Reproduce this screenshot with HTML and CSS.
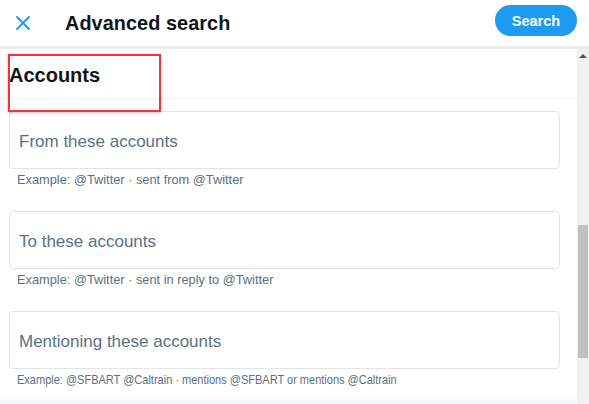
FILE: index.html
```html
<!DOCTYPE html>
<html>
<head>
<meta charset="utf-8">
<link rel="stylesheet" href="styles.css">
</head>
<body>
<div class="page">
  <header class="topbar">
    <div class="close">
      <svg viewBox="0 0 14 14" width="14" height="14"><path d="M1 1 L13 13 M13 1 L1 13" stroke="#1d9bf0" stroke-width="1.8" fill="none" stroke-linecap="round"/></svg>
    </div>
    <h1 class="title">Advanced search</h1>
    <button class="search-btn">Search</button>
  </header>
  <div class="band"></div>
  <div class="main">
    <div class="content">
      <div class="section-head">
        <h2 class="section-title">Accounts</h2>
        <div class="annot"></div>
      </div>
      <div class="field">
        <div class="box">From these accounts</div>
        <div class="hint">Example: @Twitter · sent from @Twitter</div>
      </div>
      <div class="field">
        <div class="box">To these accounts</div>
        <div class="hint">Example: @Twitter · sent in reply to @Twitter</div>
      </div>
      <div class="field">
        <div class="box">Mentioning these accounts</div>
        <div class="hint"><span class="narrow">Example: @SFBART @Caltrain · mentions @SFBART or mentions @Caltrain</span></div>
      </div>
      <div class="next"></div>
    </div>
    <div class="scrollbar">
      <div class="arrow"></div>
      <div class="track-top"></div>
      <div class="thumb"></div>
    </div>
  </div>
</div>
</body>
</html>
```

FILE: styles.css
```css
* { box-sizing: border-box; }
html, body { margin: 0; padding: 0; background: #fff; }
body { font-family: "Liberation Sans", Arial, sans-serif; color: #0f1419; }
.page { width: 589px; height: 404px; overflow: hidden; display: flex; flex-direction: column; }
.topbar { height: 46px; display: flex; align-items: center; padding: 0 12px 0 16px; flex-shrink: 0; }
.close { width: 14px; height: 14px; display: flex; margin-top: -1px; }
.title { margin: 0 0 0 35px; font-size: 19.8px; font-weight: 700; flex: 1; letter-spacing: 0.1px; }
.search-btn { width: 82px; height: 31px; border: none; border-radius: 16px; background: #1d9bf0; color: #fff; font-family: "Liberation Sans", Arial, sans-serif; font-weight: 700; font-size: 14.5px; margin-top: -5px; padding: 0; }
.band { height: 3px; background: #e8edf1; flex-shrink: 0; }
.main { flex: 1; display: flex; min-height: 0; }
.content { width: 577px; display: flex; flex-direction: column; }
.section-head { position: relative; height: 50px; border-bottom: 1px solid #eff3f4; display: flex; align-items: center; padding-left: 9px; }
.section-title { margin: 0; font-size: 20px; font-weight: 700; margin-top: 3px; }
.annot { position: absolute; left: 8px; top: 5px; width: 153px; height: 58px; border: 2px solid #e8383d; box-shadow: 0 1px 3px rgba(0,0,0,0.25); }
.field { height: 100px; padding: 12px 17px 0 9px; flex-shrink: 0; }
.box { height: 58px; border: 1px solid #dfe5ea; border-radius: 4px; display: flex; align-items: center; padding: 3px 0 0 9px; font-size: 17px; color: #5b7083; }
.hint { padding: 3px 0 0 8px; font-size: 12.8px; line-height: 16px; color: #5b7083; white-space: nowrap; }
.narrow { display: inline-block; transform: scaleX(0.86); transform-origin: left center; }
.next { flex: 1; background: #f5f8fa; }
.scrollbar { width: 12px; background: #f1f1f1; display: flex; flex-direction: column; align-items: center; }
.arrow { width: 0; height: 0; border-left: 4px solid transparent; border-right: 4px solid transparent; border-bottom: 4px solid #505050; margin-top: 5px; }
.track-top { height: 167px; }
.thumb { width: 10px; height: 133px; background: #c1c1c1; }
```
